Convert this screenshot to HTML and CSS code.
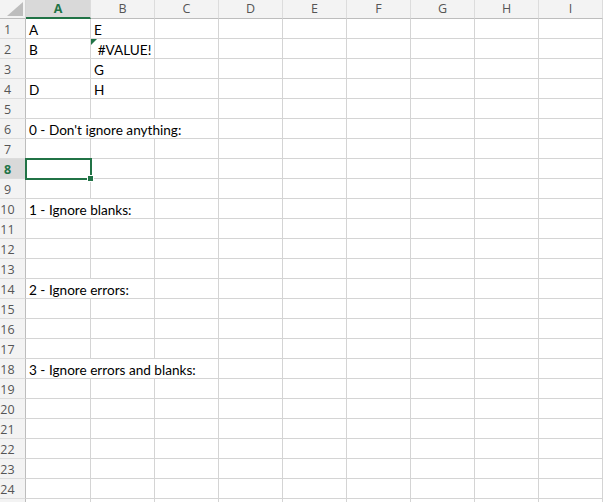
FILE: index.html
```html
<!DOCTYPE html>
<html>
<head>
<meta charset="utf-8">
<link rel="stylesheet" href="styles.css">
</head>
<body>
<div class="sheet">
  <div class="hd corner"><svg class="tri" width="16" height="14" viewBox="0 0 16 14"><polygon points="0,14 16,14 16,0" fill="#bdbdbd"/></svg></div>
  <div class="hd col sel-col">A</div>
  <div class="hd col">B</div>
  <div class="hd col">C</div>
  <div class="hd col">D</div>
  <div class="hd col">E</div>
  <div class="hd col">F</div>
  <div class="hd col">G</div>
  <div class="hd col">H</div>
  <div class="hd col">I</div>

  <div class="hd row"><span>1</span></div>
  <div class="c">A</div><div class="c">E</div><div class="c"></div><div class="c"></div><div class="c"></div><div class="c"></div><div class="c"></div><div class="c"></div><div class="c"></div>

  <div class="hd row"><span>2</span></div>
  <div class="c">B</div><div class="c err"><span class="flag"></span>#VALUE!</div><div class="c"></div><div class="c"></div><div class="c"></div><div class="c"></div><div class="c"></div><div class="c"></div><div class="c"></div>

  <div class="hd row"><span>3</span></div>
  <div class="c"></div><div class="c">G</div><div class="c"></div><div class="c"></div><div class="c"></div><div class="c"></div><div class="c"></div><div class="c"></div><div class="c"></div>

  <div class="hd row"><span>4</span></div>
  <div class="c">D</div><div class="c">H</div><div class="c"></div><div class="c"></div><div class="c"></div><div class="c"></div><div class="c"></div><div class="c"></div><div class="c"></div>

  <div class="hd row"><span>5</span></div>
  <div class="c"></div><div class="c"></div><div class="c"></div><div class="c"></div><div class="c"></div><div class="c"></div><div class="c"></div><div class="c"></div><div class="c"></div>

  <div class="hd row"><span>6</span></div>
  <div class="c span3">0 - Don't ignore anything:</div><div class="c"></div><div class="c"></div><div class="c"></div><div class="c"></div><div class="c"></div><div class="c"></div>

  <div class="hd row"><span>7</span></div>
  <div class="c"></div><div class="c"></div><div class="c"></div><div class="c"></div><div class="c"></div><div class="c"></div><div class="c"></div><div class="c"></div><div class="c"></div>

  <div class="hd row sel-row"><span>8</span></div>
  <div class="c active"><div class="selbox"><span class="handle"></span></div></div><div class="c"></div><div class="c"></div><div class="c"></div><div class="c"></div><div class="c"></div><div class="c"></div><div class="c"></div><div class="c"></div>

  <div class="hd row"><span>9</span></div>
  <div class="c"></div><div class="c"></div><div class="c"></div><div class="c"></div><div class="c"></div><div class="c"></div><div class="c"></div><div class="c"></div><div class="c"></div>

  <div class="hd row"><span>10</span></div>
  <div class="c span2">1 - Ignore blanks:</div><div class="c"></div><div class="c"></div><div class="c"></div><div class="c"></div><div class="c"></div><div class="c"></div><div class="c"></div>

  <div class="hd row"><span>11</span></div>
  <div class="c"></div><div class="c"></div><div class="c"></div><div class="c"></div><div class="c"></div><div class="c"></div><div class="c"></div><div class="c"></div><div class="c"></div>

  <div class="hd row"><span>12</span></div>
  <div class="c"></div><div class="c"></div><div class="c"></div><div class="c"></div><div class="c"></div><div class="c"></div><div class="c"></div><div class="c"></div><div class="c"></div>

  <div class="hd row"><span>13</span></div>
  <div class="c"></div><div class="c"></div><div class="c"></div><div class="c"></div><div class="c"></div><div class="c"></div><div class="c"></div><div class="c"></div><div class="c"></div>

  <div class="hd row"><span>14</span></div>
  <div class="c span2">2 - Ignore errors:</div><div class="c"></div><div class="c"></div><div class="c"></div><div class="c"></div><div class="c"></div><div class="c"></div><div class="c"></div>

  <div class="hd row"><span>15</span></div>
  <div class="c"></div><div class="c"></div><div class="c"></div><div class="c"></div><div class="c"></div><div class="c"></div><div class="c"></div><div class="c"></div><div class="c"></div>

  <div class="hd row"><span>16</span></div>
  <div class="c"></div><div class="c"></div><div class="c"></div><div class="c"></div><div class="c"></div><div class="c"></div><div class="c"></div><div class="c"></div><div class="c"></div>

  <div class="hd row"><span>17</span></div>
  <div class="c"></div><div class="c"></div><div class="c"></div><div class="c"></div><div class="c"></div><div class="c"></div><div class="c"></div><div class="c"></div><div class="c"></div>

  <div class="hd row"><span>18</span></div>
  <div class="c span3">3 - Ignore errors and blanks:</div><div class="c"></div><div class="c"></div><div class="c"></div><div class="c"></div><div class="c"></div><div class="c"></div>

  <div class="hd row"><span>19</span></div>
  <div class="c"></div><div class="c"></div><div class="c"></div><div class="c"></div><div class="c"></div><div class="c"></div><div class="c"></div><div class="c"></div><div class="c"></div>

  <div class="hd row"><span>20</span></div>
  <div class="c"></div><div class="c"></div><div class="c"></div><div class="c"></div><div class="c"></div><div class="c"></div><div class="c"></div><div class="c"></div><div class="c"></div>

  <div class="hd row"><span>21</span></div>
  <div class="c"></div><div class="c"></div><div class="c"></div><div class="c"></div><div class="c"></div><div class="c"></div><div class="c"></div><div class="c"></div><div class="c"></div>

  <div class="hd row"><span>22</span></div>
  <div class="c"></div><div class="c"></div><div class="c"></div><div class="c"></div><div class="c"></div><div class="c"></div><div class="c"></div><div class="c"></div><div class="c"></div>

  <div class="hd row"><span>23</span></div>
  <div class="c"></div><div class="c"></div><div class="c"></div><div class="c"></div><div class="c"></div><div class="c"></div><div class="c"></div><div class="c"></div><div class="c"></div>

  <div class="hd row"><span>24</span></div>
  <div class="c"></div><div class="c"></div><div class="c"></div><div class="c"></div><div class="c"></div><div class="c"></div><div class="c"></div><div class="c"></div><div class="c"></div>

  <div class="hd row"></div>
  <div class="c"></div><div class="c"></div><div class="c"></div><div class="c"></div><div class="c"></div><div class="c"></div><div class="c"></div><div class="c"></div><div class="c"></div>
</div>
</body>
</html>
```
FILE: styles.css
```css
html, body {
  margin: 0;
  padding: 0;
  background: #ffffff;
  overflow: hidden;
  width: 603px;
  height: 502px;
}

.sheet {
  display: grid;
  grid-template-columns: 26px 65px repeat(8, 64px);
  grid-template-rows: 19px;
  grid-auto-rows: 20px;
  font-family: "Lato", "Liberation Sans", sans-serif;
}

.c {
  box-sizing: border-box;
  border-right: 1px solid #d4d4d4;
  border-bottom: 1px solid #d4d4d4;
  font-size: 13.6px;
  color: #000;
  padding: 2px 0 0 3px;
  line-height: 19px;
  white-space: nowrap;
  position: relative;
}

.span2 { grid-column: span 2; }
.span3 { grid-column: span 3; }

.err {
  text-align: center;
  padding-left: 4px;
}

.flag {
  position: absolute;
  left: 0;
  top: 0;
  width: 0;
  height: 0;
  border-top: 6px solid #217346;
  border-right: 6px solid transparent;
}

.hd {
  box-sizing: border-box;
  background: #f3f3f3;
  color: #555;
  font-family: "Open Sans", "Liberation Sans", sans-serif;
  font-size: 12.5px;
  white-space: nowrap;
}

.corner {
  border-right: 1px solid #d4d4d4;
  border-bottom: 1px solid #bdbdbd;
  position: relative;
}

.tri {
  position: absolute;
  right: 2px;
  bottom: 2px;
}

.col {
  border-right: 1px solid #dcdcdc;
  border-bottom: 1px solid #bdbdbd;
  text-align: center;
  line-height: 18px;
}

.sel-col {
  background: #d9d9d9;
  color: #217346;
  font-weight: bold;
  border-bottom: 2px solid #217346;
  line-height: 17px;
}

.row {
  border-right: 1px solid #bdbdbd;
  border-bottom: 1px solid #dcdcdc;
  line-height: 21px;
}

.row span {
  display: block;
  width: 15px;
  text-align: center;
}

.sel-row {
  background: #d9d9d9;
  color: #217346;
  font-weight: bold;
}

.active {
  z-index: 2;
}

.selbox {
  position: absolute;
  left: -1px;
  top: -1px;
  right: -2px;
  bottom: -2px;
  border: 2px solid #217346;
}

.handle {
  position: absolute;
  right: -4px;
  bottom: -4px;
  width: 5px;
  height: 5px;
  background: #217346;
  border: 1px solid #ffffff;
}
```
